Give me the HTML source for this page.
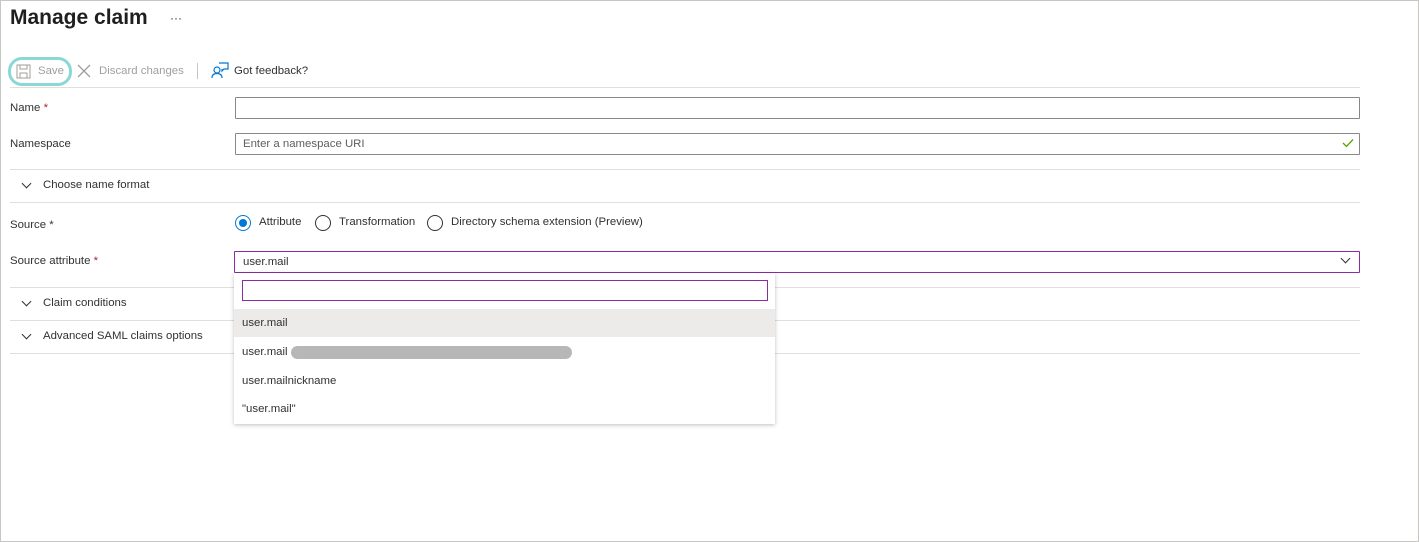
<!DOCTYPE html>
<html><head><style>
*{box-sizing:border-box}
body{margin:0;width:1419px;height:542px;background:#fff;font-family:"Liberation Sans",sans-serif;font-size:11.4px;color:#323130;position:relative;overflow:hidden}
.frame{position:absolute;left:0;top:0;width:1419px;height:542px;border:1px solid #c8c6c4}
.a{position:absolute;white-space:nowrap}
.line{position:absolute;height:1px;background:#e1dfdd}
.inp{position:absolute;border:1px solid #8a8886;height:22px;border-radius:1px}
.radio{position:absolute;width:16px;height:16px;border:1px solid #323130;border-radius:50%}
.chev{position:absolute;width:7px;height:7px;border-right:1px solid #323130;border-bottom:1px solid #323130;transform:rotate(45deg)}
</style></head><body>
<div class="frame"></div>
<div class="a" style="left:10px;top:6px;font-size:21px;font-weight:bold;color:#201f1e">Manage claim</div>
<div class="a" style="left:170px;top:11px;font-size:12px">···</div>
<div class="a" style="left:8px;top:57px;width:64px;height:29px;border:3px solid #8ad8d6;border-radius:14px"></div>
<svg class="a" style="left:16px;top:64px" width="15" height="15" viewBox="0 0 15 15"><rect x="1" y="1" width="13" height="13" fill="none" stroke="#a19f9d"/><rect x="4" y="1" width="7" height="4" fill="none" stroke="#a19f9d"/><rect x="4" y="9" width="7" height="5" fill="none" stroke="#a19f9d"/></svg>
<div class="a" style="left:38px;top:65px;color:#a19f9d">Save</div>
<svg class="a" style="left:77px;top:64px" width="14" height="14"><path d="M1 1L13 13M13 1L1 13" stroke="#a19f9d" stroke-width="1.3"/></svg>
<div class="a" style="left:99px;top:65px;color:#a19f9d">Discard changes</div>
<div class="a" style="left:197px;top:63px;width:1px;height:16px;background:#c8c6c4"></div>
<svg class="a" style="left:211px;top:62px" width="18" height="17" viewBox="0 0 18 17"><circle cx="6" cy="8" r="3" fill="none" stroke="#0078d4" stroke-width="1.2"/><path d="M1 16c0-3 2-4.5 5-4.5s5 1.5 5 4.5" fill="none" stroke="#0078d4" stroke-width="1.2"/><path d="M8 1h9v6h-4l-2 2V7" fill="none" stroke="#0078d4" stroke-width="1.2"/></svg>
<div class="a" style="left:234px;top:65px;color:#323130">Got feedback?</div>
<div class="line" style="left:10px;top:87px;width:1350px"></div>
<div class="a" style="left:10px;top:102px">Name <span style="color:#a4262c">*</span></div>
<div class="inp" style="left:235px;top:97px;width:1125px"></div>
<div class="a" style="left:10px;top:138px">Namespace</div>
<div class="inp" style="left:235px;top:133px;width:1125px"></div>
<div class="a" style="left:243px;top:138px;color:#605e5c">Enter a namespace URI</div>
<svg class="a" style="left:1342px;top:138px" width="12" height="10"><path d="M1 5l3.5 3.5L11 1.5" fill="none" stroke="#57a300" stroke-width="1.3"/></svg>
<div class="line" style="left:10px;top:169px;width:1350px"></div>
<div class="chev" style="left:23px;top:180px"></div>
<div class="a" style="left:43px;top:179px">Choose name format</div>
<div class="line" style="left:10px;top:202px;width:1350px"></div>
<div class="a" style="left:10px;top:219px">Source *</div>
<div class="radio" style="left:235px;top:215px;border-color:#0078d4"><div style="position:absolute;left:3px;top:3px;width:8px;height:8px;border-radius:50%;background:#0078d4"></div></div>
<div class="a" style="left:259px;top:216px">Attribute</div>
<div class="radio" style="left:315px;top:215px"></div>
<div class="a" style="left:339px;top:216px">Transformation</div>
<div class="radio" style="left:427px;top:215px"></div>
<div class="a" style="left:451px;top:216px">Directory schema extension (Preview)</div>
<div class="a" style="left:10px;top:255px">Source attribute <span style="color:#a4262c">*</span></div>
<div class="inp" style="left:234px;top:251px;width:1126px;border-color:#8a2da5"></div>
<div class="a" style="left:243px;top:256px">user.mail</div>
<div class="chev" style="left:1342px;top:255px"></div>
<div class="line" style="left:10px;top:287px;width:1350px"></div>
<div class="chev" style="left:23px;top:298px"></div>
<div class="a" style="left:43px;top:297px">Claim conditions</div>
<div class="line" style="left:10px;top:320px;width:1350px"></div>
<div class="chev" style="left:23px;top:331px"></div>
<div class="a" style="left:43px;top:330px">Advanced SAML claims options</div>
<div class="line" style="left:10px;top:353px;width:1350px"></div>
<div class="a" style="left:234px;top:273px;width:541px;height:151px;background:#fff;box-shadow:0 1px 4px rgba(0,0,0,.25)">
<div class="a" style="left:8px;top:7px;width:526px;height:21px;border:1px solid #8a2da5"></div>
<div class="a" style="left:0;top:36px;width:541px;height:28px;background:#edebe9"></div>
<div class="a" style="left:8px;top:44px">user.mail</div>
<div class="a" style="left:8px;top:73px">user.mail</div>
<div class="a" style="left:57px;top:73px;width:281px;height:13px;border-radius:7px;background:#b7b7b7"></div>
<div class="a" style="left:8px;top:102px">user.mailnickname</div>
<div class="a" style="left:8px;top:130px">"user.mail"</div>
</div>
</body></html>
